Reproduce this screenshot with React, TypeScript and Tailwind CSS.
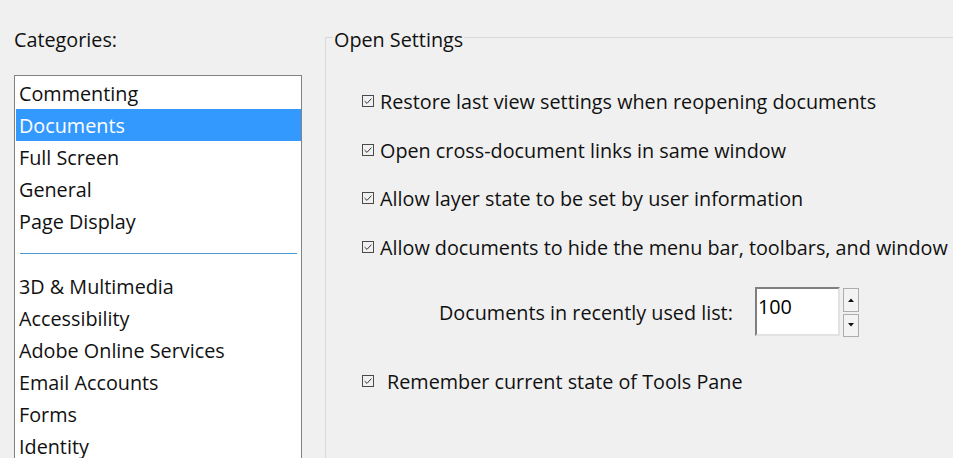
import React from 'react';

const topCategories = ['Commenting', 'Documents', 'Full Screen', 'General', 'Page Display'];
const moreCategories = ['3D & Multimedia', 'Accessibility', 'Adobe Online Services', 'Email Accounts', 'Forms', 'Identity'];

const openOptions = [
    'Restore last view settings when reopening documents',
    'Open cross-document links in same window',
    'Allow layer state to be set by user information',
    'Allow documents to hide the menu bar, toolbars, and window',
];

const CheckBox: React.FC = () => (
    <svg width="12" height="12" viewBox="0 0 12 12" className="shrink-0">
        <rect x="0.5" y="0.5" width="11" height="11" fill="none" stroke="#4a4a4a" />
        <path d="M2.6 6.1 L5 8.4 L9.4 3.6" fill="none" stroke="#333" strokeWidth="1" />
    </svg>
);

const CategoryRow: React.FC<{ label: string; selected?: boolean }> = ({ label, selected }) => (
    <div
        className={`h-[32px] leading-[32px] pt-px pl-[3px] ${selected ? 'bg-[#3399ff] text-white' : 'text-[#111]'}`}
    >
        {label}
    </div>
);

export default function App() {
    return (
        <div className="w-[953px] h-[458px] overflow-hidden bg-[#f0f0f0] flex font-['Open_Sans',sans-serif] text-[19.8px] text-[#111] whitespace-nowrap">
            {/* Categories column */}
            <div className="w-[325px] shrink-0 pl-[14px] pt-[26px]">
                <div className="leading-[28px]">Categories:</div>
                <div className="mt-[21px] w-[288px] h-[400px] bg-white border border-[#828282] pl-px pt-px">
                    {topCategories.map((c) => (
                        <CategoryRow key={c} label={c} selected={c === 'Documents'} />
                    ))}
                    <div className="h-[33px] flex items-center pl-[4px] pr-[4px]">
                        <div className="h-px w-full bg-[#4a9bd1]" />
                    </div>
                    {moreCategories.map((c) => (
                        <CategoryRow key={c} label={c} />
                    ))}
                </div>
            </div>

            {/* Open Settings group */}
            <div className="flex-1 mt-[37px] relative border-t border-l border-[#d9d9d9] pl-[36px] pt-[49px]">
                <span className="absolute left-[7px] top-[-12px] px-px leading-[28px] bg-[#f0f0f0]">Open Settings</span>

                <div className="flex flex-col gap-[20.5px]">
                    {openOptions.map((o) => (
                        <div key={o} className="flex items-center gap-[6px] leading-[28px] h-[28px]">
                            <CheckBox />
                            <span className="relative top-[1px]">{o}</span>
                        </div>
                    ))}
                </div>

                <div className="mt-[26px] flex items-center h-[49px]">
                    <span className="ml-[77px] leading-[28px] relative top-[2px]">Documents in recently used list:</span>
                    <div className="ml-[22px] w-[85px] h-[49px] bg-white border-2 border-t-[#7f7f7f] border-l-[#7f7f7f] border-r-[#e2e2e2] border-b-[#e2e2e2] pt-[4px] pl-px leading-[28px] text-black">
                        100
                    </div>
                    <div className="ml-[3px] flex flex-col gap-[2px] self-start">
                        <div className="w-[16px] h-[24px] mt-px border border-[#adadad] bg-[#f3f3f3] flex items-center justify-center">
                            <svg width="6" height="4" viewBox="0 0 6 4">
                                <path d="M0 4 L3 0.5 L6 4 Z" fill="#111" />
                            </svg>
                        </div>
                        <div className="w-[16px] h-[23px] border border-[#adadad] bg-[#f3f3f3] flex items-center justify-center">
                            <svg width="6" height="4" viewBox="0 0 6 4">
                                <path d="M0 0 L6 0 L3 3.5 Z" fill="#111" />
                            </svg>
                        </div>
                    </div>
                </div>

                <div className="mt-[31px] flex items-center gap-[13px] leading-[28px] h-[28px]">
                    <CheckBox />
                    <span className="relative top-[1px]">Remember current state of Tools Pane</span>
                </div>
            </div>
        </div>
    );
}
